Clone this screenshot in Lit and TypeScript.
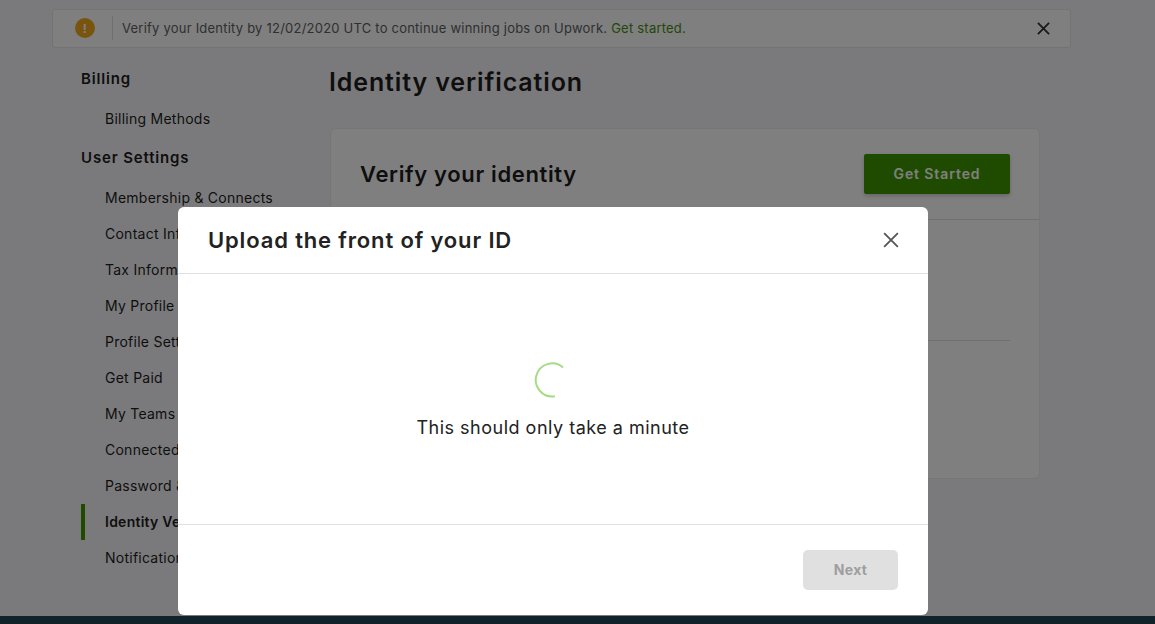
import { LitElement, html, css } from "lit";
import { customElement } from "lit/decorators.js";

const X = (size: number, w: number, color: string) => html`<svg width=${size} height=${size} viewBox="0 0 14 14" fill="none" stroke=${color} stroke-width=${w}><path d="M1 1L13 13M13 1L1 13"/></svg>`;

@customElement("app-root")
export class AppRoot extends LitElement {
  static styles = css`
    :host { display: block; height: 100vh; overflow: hidden; position: relative; font-family: Inter, "Noto Sans", sans-serif; color: #1d1d1d; }
    .page { height: 100%; box-sizing: border-box; background: #f5f5f8; display: flex; flex-direction: column; padding-top: 9px; }
    .banner { margin-left: 52px; width: 1019px; height: 39px; flex: none; box-sizing: border-box; border: 1px solid #e6e6e6; border-radius: 3px; background: #fff; display: flex; align-items: center; padding: 0 0 1px 22px; font-size: 13px; letter-spacing: .22px; color: #5e5e5e; }
    .warn { width: 20px; height: 20px; border-radius: 50%; background: #f2a81d; color: #fff; font-size: 12px; font-weight: 700; display: flex; align-items: center; justify-content: center; }
    .sep { width: 1px; height: 24px; background: #e0e0e0; margin: 0 9px 0 17px; }
    .link { color: #458f10; margin-left: 4px; }
    .banner-x { margin-left: auto; margin-right: 20px; display: flex; }
    .cols { flex: 1; display: flex; padding-left: 81px; min-height: 0; }
    .side { width: 248px; padding-top: 21px; }
    .h { font-size: 15px; font-weight: 600; letter-spacing: .85px; line-height: 20px; }
    .items { padding: 12px 0 0; }
    .items.one { padding: 12px 0 11px; }
    .item { height: 36px; line-height: 36px; padding-left: 24px; font-size: 14px; letter-spacing: .25px; white-space: nowrap; }
    .item.active { font-weight: 600; border-left: 4px solid #3f9600; padding-left: 20px; }
    .main { width: 711px; padding-top: 18px; }
    h1 { margin: 0 0 30px; font-size: 25px; line-height: 32px; font-weight: 600; letter-spacing: .88px; color: #1d1d1d; }
    .card { margin-left: 1px; height: 351px; box-sizing: border-box; background: #fff; border: 1px solid #ececec; border-radius: 6px; }
    .card-h { height: 91px; box-sizing: border-box; border-bottom: 1px solid #e0e0e0; display: flex; align-items: center; justify-content: space-between; padding: 0 29px; }
    .card-h h2 { margin: 0; font-size: 22px; font-weight: 600; letter-spacing: .65px; }
    .btn { width: 146px; height: 40px; border-radius: 2px; background: #3f9600; color: #fff; display: flex; align-items: center; justify-content: center; padding-bottom: 1px; box-sizing: border-box; font-size: 14px; font-weight: 600; letter-spacing: .9px; box-shadow: 0 2px 4px rgba(0,0,0,.2); }
    .card-b { padding: 120px 29px 0; }
    .rule { height: 1px; background: #e0e0e0; }
    .foot { height: 8px; background: #204656; flex: none; }
    .scrim { position: absolute; inset: 0; background: rgba(0,0,0,.5); }
    .modal { position: absolute; left: 178px; top: 207px; width: 750px; height: 408px; background: #fff; border-radius: 6px; display: flex; flex-direction: column; }
    .m-h { height: 67px; box-sizing: border-box; border-bottom: 1px solid #e0e0e0; display: flex; align-items: center; justify-content: space-between; padding: 0 29px 0 30px; }
    .m-h h2 { margin: 0; font-size: 22px; font-weight: 600; letter-spacing: .85px; color: #222; }
    .m-b { box-sizing: border-box; height: 251px; border-bottom: 1px solid #e0e0e0; display: flex; flex-direction: column; align-items: center; padding-top: 88px; }
    .m-b svg { margin-left: -2px; }
    .m-b p { margin: 18px 0 0; font-size: 18px; line-height: 24px; letter-spacing: .5px; color: #222; }
    .m-f { flex: 1; display: flex; justify-content: flex-end; align-items: flex-start; padding: 25px 30px 0 0; }
    .next { width: 95px; height: 40px; box-sizing: border-box; padding-bottom: 1px; border-radius: 5px; background: #e0e0e0; color: #9e9e9e; display: flex; align-items: center; justify-content: center; font-size: 14px; font-weight: 700; letter-spacing: .3px; }
  `;

  render() {
    const items = ["Membership & Connects", "Contact Info", "Tax Information", "My Profile", "Profile Settings", "Get Paid", "My Teams", "Connected Services", "Password & Security"];
    return html`
      <div class="page">
        <div class="banner">
          <span class="warn">!</span><span class="sep"></span>
          <span>Verify your Identity by 12/02/2020 UTC to continue winning jobs on Upwork.</span><span class="link">Get started.</span>
          <span class="banner-x">${X(13, 2, "#333")}</span>
        </div>
        <div class="cols">
          <nav class="side">
            <div class="h">Billing</div>
            <div class="items one"><div class="item">Billing Methods</div></div>
            <div class="h">User Settings</div>
            <div class="items">
              ${items.map((t) => html`<div class="item">${t}</div>`)}
              <div class="item active">Identity Verification</div>
              <div class="item">Notification Settings</div>
            </div>
          </nav>
          <main class="main">
            <h1>Identity verification</h1>
            <div class="card">
              <div class="card-h"><h2>Verify your identity</h2><span class="btn">Get Started</span></div>
              <div class="card-b"><div class="rule"></div></div>
            </div>
          </main>
        </div>
        <div class="foot"></div>
      </div>
      <div class="scrim"></div>
      <div class="modal">
        <div class="m-h"><h2>Upload the front of your ID</h2>${X(16, 1.6, "#555")}</div>
        <div class="m-b">
          <svg width="36" height="36" viewBox="0 0 36 36" fill="none" stroke="#a5dc86" stroke-width="2"><path d="M29 5.4A16.5 16.5 0 1 0 21 34.2"/></svg>
          <p>This should only take a minute</p>
        </div>
        <div class="m-f"><span class="next">Next</span></div>
      </div>
    `;
  }
}
